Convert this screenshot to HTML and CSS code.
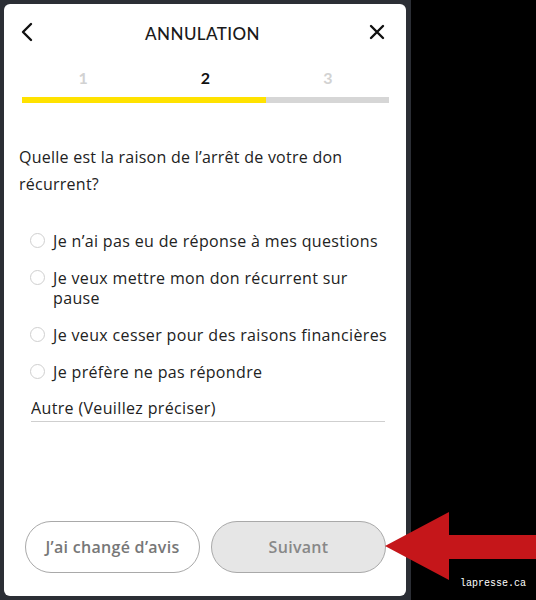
FILE: index.html
```html
<!DOCTYPE html>
<html lang="fr">
<head>
    <meta charset="UTF-8">
    <meta name="viewport" content="width=device-width, initial-scale=1.0">
    <title>Annulation</title>
    <link rel="stylesheet" href="styles.css">
</head>
<body>
    <div class="frame">
        <div class="panel">
            <div class="header">
                <button class="icon-btn" aria-label="Retour">
                    <svg width="14" height="20" viewBox="0 0 14 20"><path d="M11 2 L3 10 L11 18" fill="none" stroke="#111" stroke-width="2.4" stroke-linecap="round" stroke-linejoin="round"/></svg>
                </button>
                <h1 class="title">ANNULATION</h1>
                <button class="icon-btn close" aria-label="Fermer">
                    <svg width="16" height="16" viewBox="0 0 16 16"><path d="M2 2 L14 14 M14 2 L2 14" fill="none" stroke="#111" stroke-width="2.4" stroke-linecap="round"/></svg>
                </button>
            </div>

            <div class="steps">
                <div class="step-nums">
                    <span>1</span>
                    <span class="active">2</span>
                    <span>3</span>
                </div>
                <div class="progress"><div class="progress-fill" style="width: 66.5%"></div></div>
            </div>

            <p class="question">Quelle est la raison de l’arrêt de votre don récurrent?</p>

            <div class="options">
                <label class="option"><input type="radio" name="reason"><span>Je n’ai pas eu de réponse à mes questions</span></label>
                <label class="option"><input type="radio" name="reason"><span>Je veux mettre mon don récurrent sur<br>pause</span></label>
                <label class="option"><input type="radio" name="reason"><span>Je veux cesser pour des raisons financières</span></label>
                <label class="option"><input type="radio" name="reason"><span>Je préfère ne pas répondre</span></label>
            </div>

            <input class="other" type="text" placeholder="Autre (Veuillez préciser)">

            <div class="actions">
                <button class="pill">J’ai changé d’avis</button>
                <button class="pill disabled">Suivant</button>
            </div>
        </div>
    </div>

    <svg class="arrow" width="151" height="70" viewBox="0 0 151 70"><polygon points="0,35 64,1 64,24 151,24 151,48 64,48 64,69" fill="#c5161a"/></svg>
    <div class="credit">lapresse.ca</div>
</body>
</html>
```

FILE: styles.css
```css
body {
    margin: 0;
    width: 536px;
    height: 600px;
    background: #000;
    position: relative;
    overflow: hidden;
    font-family: "Open Sans", "Noto Sans", sans-serif;
    color: #222;
}
.frame {
    width: 411px;
    height: 600px;
    box-sizing: border-box;
    background: #2b2e35;
    padding: 4px 5px 4px 4px;
}
.panel {
    height: 100%;
    background: #fff;
    border-radius: 6px;
    display: flex;
    flex-direction: column;
}
.header {
    height: 56px;
    display: grid;
    grid-template-columns: 1fr auto 1fr;
    align-items: center;
    padding: 0 21px 0 16px;
}
.icon-btn {
    background: none;
    border: none;
    padding: 0;
    display: flex;
    cursor: pointer;
}
.close {
    justify-self: end;
}
.title {
    margin: 0;
    font-family: Lato, sans-serif;
    font-size: 17px;
    font-weight: 500;
    letter-spacing: 0.4px;
    color: #1a1a1a;
    padding-top: 3px;
}
.steps {
    margin: 0 17px 0 18px;
}
.step-nums {
    display: grid;
    grid-template-columns: repeat(3, 1fr);
    text-align: center;
    padding-top: 8px;
    line-height: 20px;
    font-family: Lato, sans-serif;
    font-size: 16px;
    font-weight: 700;
    color: #d2d2d2;
}
.step-nums .active {
    color: #111;
}
.progress {
    margin-top: 9px;
    height: 6px;
    background: #d6d6d6;
}
.progress-fill {
    height: 100%;
    background: #ffe200;
}
.question {
    margin: 41px 0 0 15px;
    padding-right: 30px;
    font-size: 16px;
    letter-spacing: 0.25px;
    line-height: 27px;
}
.options {
    margin: 33px 0 0 26px;
    display: flex;
    flex-direction: column;
    gap: 17px;
}
.option {
    display: flex;
    align-items: flex-start;
    gap: 8px;
    font-size: 16px;
    letter-spacing: 0.35px;
    line-height: 20px;
    cursor: pointer;
}
.option input {
    appearance: none;
    margin: 2px 0 0;
    width: 15px;
    height: 15px;
    border: 1px solid #cfcfcf;
    border-radius: 50%;
    flex-shrink: 0;
}
.other {
    margin: 16px 21px 0 27px;
    padding: 0 0 3px;
    border: none;
    border-bottom: 1px solid #cfcfcf;
    font-family: inherit;
    font-size: 16px;
    letter-spacing: 0.35px;
    line-height: 20px;
    outline: none;
}
.other::placeholder {
    color: #222;
}
.actions {
    margin-top: auto;
    padding: 0 20px 23px 21px;
    display: flex;
    gap: 11px;
}
.pill {
    flex: 1;
    height: 52px;
    border-radius: 26px;
    border: 1px solid #a9a9a9;
    background: #fff;
    color: #777;
    font-family: inherit;
    font-size: 16px;
    letter-spacing: 0.3px;
    font-weight: 600;
    cursor: pointer;
}
.pill.disabled {
    background: #e6e6e6;
    color: #888;
}
.arrow {
    position: absolute;
    left: 385px;
    top: 511px;
}
.credit {
    position: absolute;
    left: 460px;
    top: 578px;
    font-family: "Liberation Mono", monospace;
    font-size: 10px;
    color: #fff;
}
```
